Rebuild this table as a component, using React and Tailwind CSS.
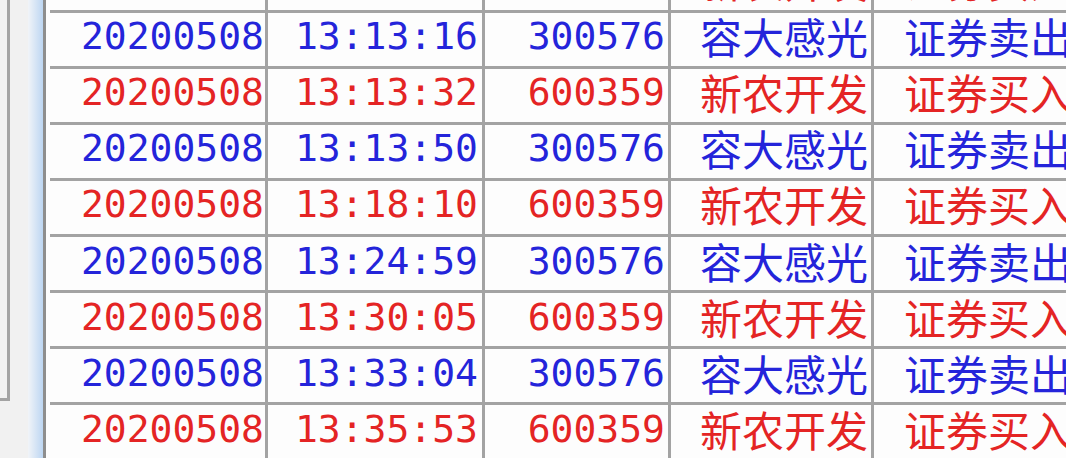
import React from "react";

const rows = [
  ["20200508", "13:12:48", "600359", "新农开发", "证券买入", "r"],
  ["20200508", "13:13:16", "300576", "容大感光", "证券卖出", "b"],
  ["20200508", "13:13:32", "600359", "新农开发", "证券买入", "r"],
  ["20200508", "13:13:50", "300576", "容大感光", "证券卖出", "b"],
  ["20200508", "13:18:10", "600359", "新农开发", "证券买入", "r"],
  ["20200508", "13:24:59", "300576", "容大感光", "证券卖出", "b"],
  ["20200508", "13:30:05", "600359", "新农开发", "证券买入", "r"],
  ["20200508", "13:33:04", "300576", "容大感光", "证券卖出", "b"],
  ["20200508", "13:35:53", "600359", "新农开发", "证券买入", "r"],
];

const num = { fontFamily: '"DejaVu Sans Mono", monospace' };
const cjk = { fontFamily: '"Noto Sans CJK SC", sans-serif' };

export default function App() {
  return (
    <div className="w-[1066px] h-[458px] overflow-hidden flex bg-[#fdfdfd]">
      <div className="w-[28px] shrink-0 bg-[#f1f1f1]">
        <div className="w-[10px] h-[401px] border-r-[3px] border-b-[3px] border-[#a3a3a3]" />
      </div>
      <div className="w-[15px] shrink-0 bg-gradient-to-r from-[#f1f4f8] to-[#bdd6f2]" />
      <div className="w-[3px] shrink-0 bg-[#8e8e8e]" />
      <div className="w-[4px] shrink-0" />
      <div className="flex-1 flex flex-col mt-[-43.6px]">
        {rows.map((r, i) => {
          const color = r[5] === "b" ? "text-[#2424da]" : "text-[#e42424]";
          const numPad = i === 0 ? "pb-[16px]" : "pb-[6px]";
          return (
            <div
              key={i}
              className={`flex shrink-0 h-[56.14px] border-b-[3px] border-[#a3a3a3] ${color}`}
            >
              <div className={`w-[218px] shrink-0 border-r-[3px] border-[#a3a3a3] flex items-center justify-end pr-[1px] ${numPad} text-[38px] leading-none`} style={num}>
                {r[0]}
              </div>
              <div className={`w-[217px] shrink-0 border-r-[3px] border-[#a3a3a3] flex items-center justify-end pr-[4px] ${numPad} text-[38px] leading-none`} style={num}>
                {r[1]}
              </div>
              <div className={`w-[186px] shrink-0 border-r-[3px] border-[#a3a3a3] flex items-center justify-end pr-[3px] ${numPad} text-[38px] leading-none`} style={num}>
                {r[2]}
              </div>
              <div className="w-[203px] shrink-0 border-r-[3px] border-[#a3a3a3] flex items-center justify-end pr-[3px] pb-[6px] text-[42px] leading-none" style={cjk}>
                {r[3]}
              </div>
              <div className="flex-1 flex items-center pl-[30px] pb-[6px] text-[42px] leading-none whitespace-nowrap overflow-hidden" style={cjk}>
                {r[4]}
              </div>
            </div>
          );
        })}
      </div>
    </div>
  );
}
